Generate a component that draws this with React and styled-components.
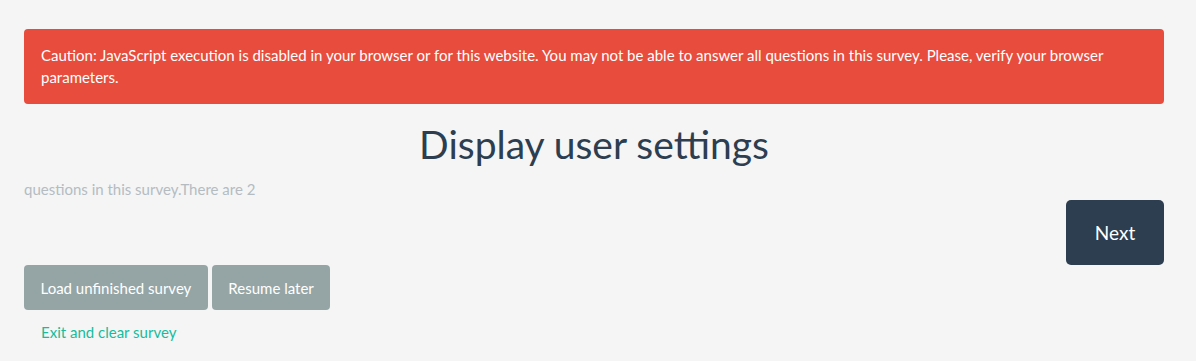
import React from "react";
import styled, { createGlobalStyle } from "styled-components";

const GlobalStyle = createGlobalStyle`
  body {
    margin: 0;
    background: #f5f5f5;
    font-family: Lato, "Open Sans", sans-serif;
  }
`;

const App = () => {
  return (
    <>
      <GlobalStyle />
      <Page>
        <Alert>
          Caution: JavaScript execution is disabled in your browser or for this
          website. You may not be able to answer all questions in this survey.
          Please, verify your browser parameters.
        </Alert>
        <Title>Display user settings</Title>
        <Info>questions in this survey.There are 2</Info>
        <NavRow>
          <NextButton type="button">Next</NextButton>
        </NavRow>
        <ActionRow>
          <GreyButton type="button">Load unfinished survey</GreyButton>
          <GreyButton type="button">Resume later</GreyButton>
        </ActionRow>
        <ClearLink href="#">Exit and clear survey</ClearLink>
      </Page>
    </>
  );
};

const Page = styled.div`
  width: 1140px;
  margin-left: 24px;
  padding-top: 29px;
  display: flex;
  flex-direction: column;
`;

const Alert = styled.div`
  background: #e74c3c;
  color: #fff;
  border-radius: 4px;
  padding: 16px 17px;
  font-size: 15px;
  line-height: 21.5px;
`;

const Title = styled.h1`
  margin: 14px 0 0;
  text-align: center;
  font-weight: 400;
  font-size: 39px;
  line-height: 52px;
  color: #2c3e50;
`;

const Info = styled.div`
  margin-top: 9px;
  font-size: 15px;
  line-height: 20px;
  color: #b4bcc2;
`;

const NavRow = styled.div`
  display: flex;
  justify-content: flex-end;
  margin-top: 1px;
`;

const NextButton = styled.button`
  width: 98px;
  height: 65px;
  border: none;
  border-radius: 5px;
  background: #2c3e50;
  color: #fff;
  font-family: Lato, sans-serif;
  font-size: 19px;
`;

const ActionRow = styled.div`
  display: flex;
  gap: 4px;
`;

const GreyButton = styled.button`
  height: 45px;
  padding: 0 16.5px;
  border: none;
  border-radius: 4px;
  background: #95a5a6;
  color: #fff;
  font-family: Lato, sans-serif;
  font-size: 15px;
`;

const ClearLink = styled.a`
  align-self: flex-start;
  margin: 12px 0 0 17px;
  color: #18bc9c;
  font-size: 15px;
  line-height: 20px;
  text-decoration: none;
`;

export default App;
